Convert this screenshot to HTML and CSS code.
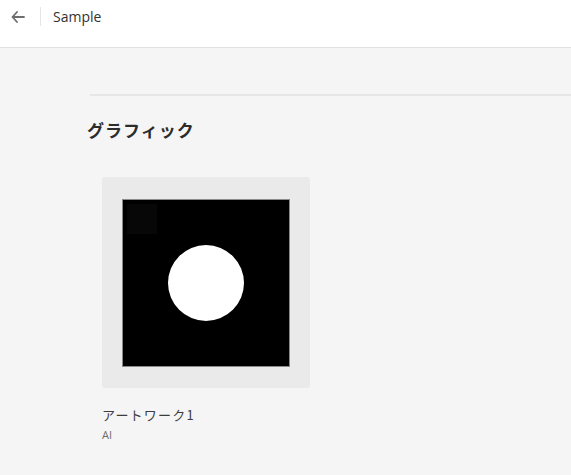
FILE: index.html
```html
<!DOCTYPE html>
<html lang="ja">
<head>
<meta charset="utf-8">
<title>Sample</title>
<link rel="stylesheet" href="styles.css">
</head>
<body>
<header class="topbar">
  <button class="back" aria-label="戻る">
    <svg width="14" height="12" viewBox="0 0 14 12"><path d="M6 1 L1.5 6 L6 11 M1.5 6 H13" fill="none" stroke="#6e6e6e" stroke-width="1.8" stroke-linecap="round" stroke-linejoin="round"/></svg>
  </button>
  <span class="sep"></span>
  <span class="title">Sample</span>
</header>
<main class="content">
  <div class="rule"></div>
  <h2 class="heading">グラフィック</h2>
  <div class="grid">
    <div class="item">
      <div class="thumb">
        <div class="art">
          <span class="corner"></span>
          <span class="dot"></span>
        </div>
      </div>
      <div class="name">アートワーク1</div>
      <div class="type">AI</div>
    </div>
  </div>
</main>
</body>
</html>
```
FILE: styles.css
```css
* { box-sizing: border-box; }
html, body { margin: 0; padding: 0; }
body {
  width: 571px;
  height: 475px;
  overflow: hidden;
  background: #f5f5f5;
  font-family: "Noto Sans CJK JP", "Noto Sans", sans-serif;
  color: #2c2c2c;
}
.topbar {
  height: 48px;
  background: #ffffff;
  border-bottom: 1px solid #e1e1e1;
  display: flex;
  align-items: flex-start;
}
.back {
  margin: 10px 0 0 10px;
  width: 16px;
  height: 14px;
  padding: 0;
  border: 0;
  background: none;
  display: flex;
  align-items: center;
  justify-content: center;
}
.sep {
  width: 1px;
  height: 19px;
  background: #e6e6e6;
  margin: 7px 0 0 14px;
}
.title {
  margin: 7px 0 0 12px;
  font-family: "Open Sans", "Noto Sans", sans-serif;
  font-size: 14px;
  line-height: 20px;
  color: #323232;
}
.content {
  padding: 46px 0 0 90px;
}
.rule {
  height: 2px;
  background: #e6e6e6;
}
.heading {
  margin: 20px 0 0 -3px;
  font-size: 17px;
  font-weight: 700;
  line-height: 28px;
  letter-spacing: 1px;
  color: #2c2c2c;
}
.grid {
  display: flex;
  padding: 33px 0 0 12px;
}
.item {
  width: 208px;
}
.thumb {
  width: 208px;
  height: 211px;
  background: #eaeaea;
  border-radius: 3px;
  padding: 22px 0 0 20px;
}
.art {
  position: relative;
  width: 168px;
  height: 168px;
  background: #000;
  border: 1px solid #8a8a8a;
}
.corner {
  position: absolute;
  left: 4px;
  top: 4px;
  width: 30px;
  height: 30px;
  background: #070707;
}
.dot {
  position: absolute;
  left: 45px;
  top: 45px;
  width: 76px;
  height: 76px;
  border-radius: 50%;
  background: #fff;
}
.name {
  margin-top: 17px;
  font-size: 13px;
  line-height: 20px;
  color: #3c3c3c;
  letter-spacing: 1.2px;
}
.type {
  margin-top: 3px;
  font-family: "Open Sans", "Noto Sans", sans-serif;
  font-size: 11px;
  line-height: 14px;
  color: #6e6e6e;
}
```
